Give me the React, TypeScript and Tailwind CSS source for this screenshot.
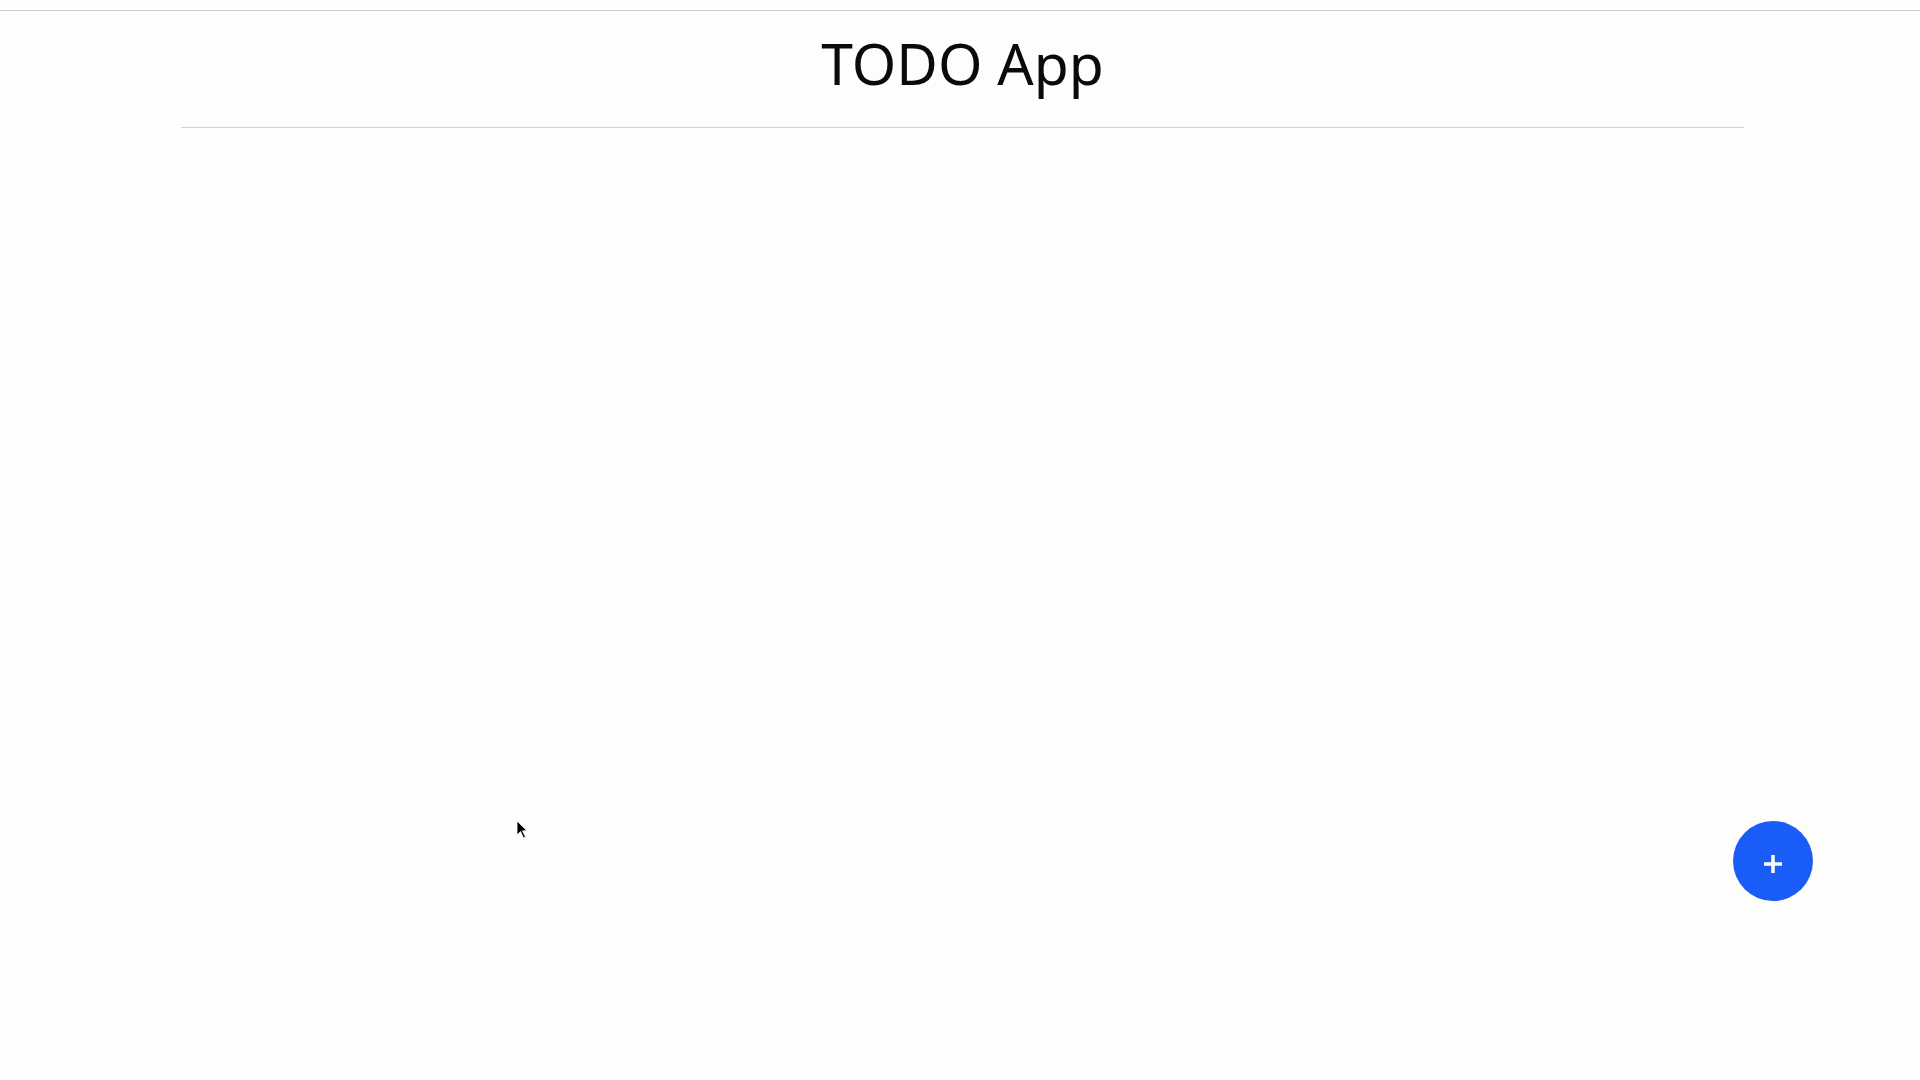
import { useState } from "react";

const App = () => {
  const [todos, setTodos] = useState<string[]>([]);

  const handleAdd = () => {
    // nothing to add yet, list stays empty in the screenshot
    setTodos([...todos]);
  };

  return (
    <div className="relative min-h-screen w-full bg-[#fdfdfb] font-['Noto_Sans',sans-serif] text-black">
      <div className="h-[11px] border-b border-[#cfcfcf]"></div>

      <div className="ml-[181px] mr-[176px]">
        <h1 className="mt-[24px] text-center text-[57px] leading-none font-normal text-[#0a0a0a]">TODO App</h1>
        <div className="mt-[35px] border-b border-[#d3d3d3]"></div>

        <ul>
          {todos.map((t, i) => (
            <li key={i}>{t}</li>
          ))}
        </ul>
      </div>

      {/* mouse pointer seen in the capture */}
      <svg className="absolute left-[516px] top-[820px]" width="12" height="20" viewBox="0 0 12 20">
        <path d="M1 1 L1 15 L4.5 11.5 L7.5 18 L9.5 17 L6.5 10.8 L11 10.8 Z" fill="#000" stroke="#fff" strokeWidth="0.8" />
      </svg>

      <button
        onClick={handleAdd}
        className="absolute right-[107px] top-[821px] flex h-[80px] w-[80px] items-center justify-center rounded-full bg-[#1a5cf8] text-white"
      >
        <svg width="22" height="22" viewBox="0 0 22 22" className="mt-[6px]">
          <path d="M11 2 V20 M2 11 H20" stroke="#fff" strokeWidth="3.5" />
        </svg>
      </button>
    </div>
  );
};

export default App;
